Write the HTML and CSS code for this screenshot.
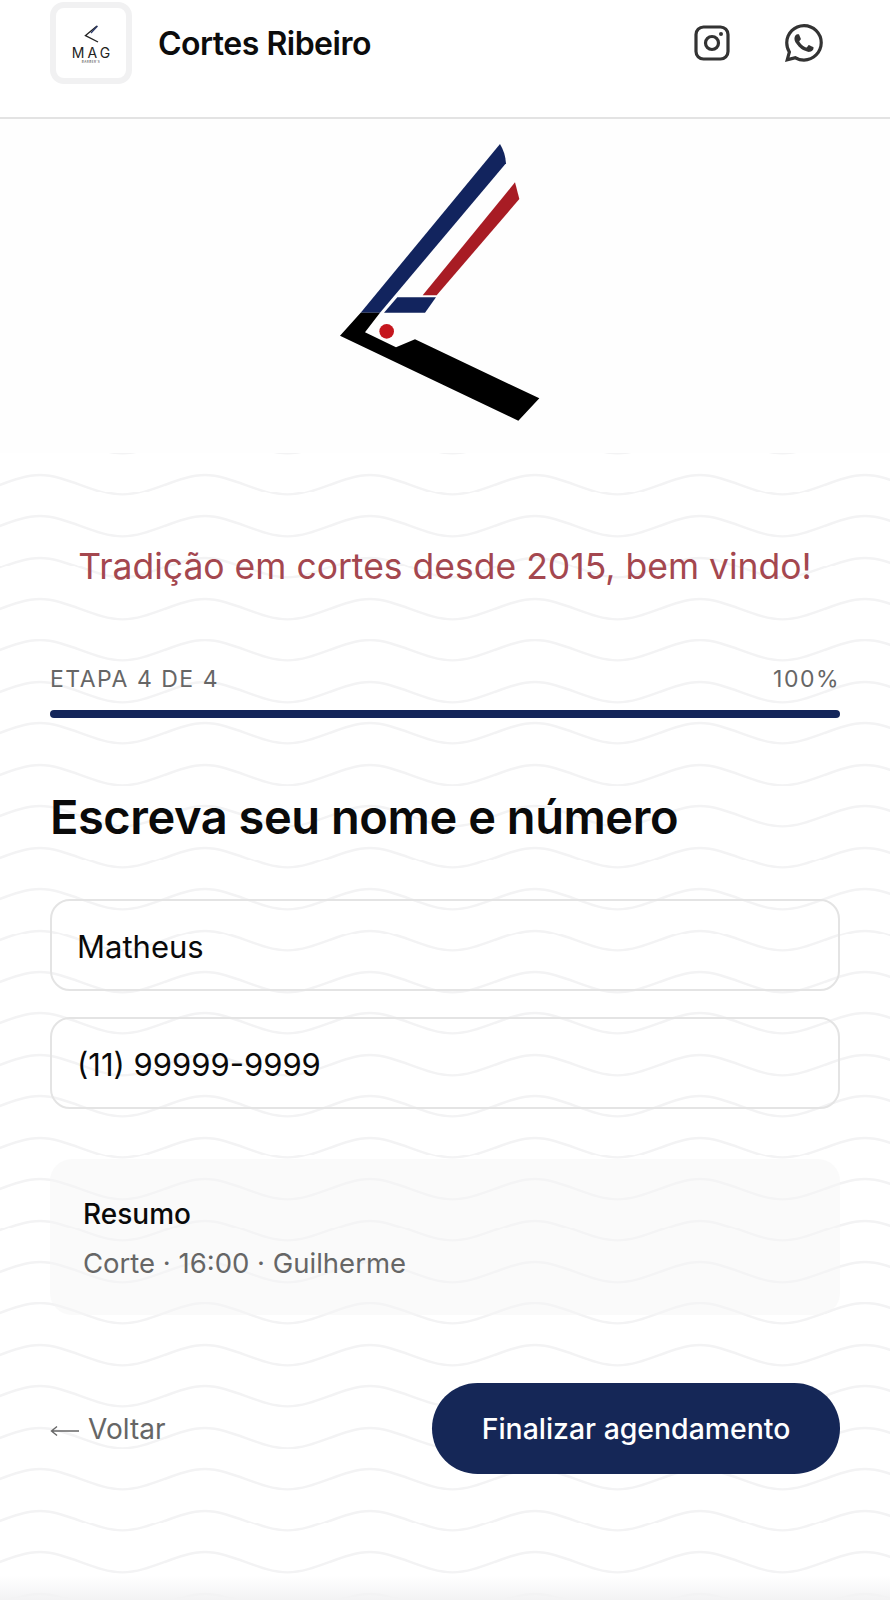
FILE: index.html
```html
<!DOCTYPE html>
<html lang="pt-BR">
<head>
  <meta charset="UTF-8">
  <meta name="viewport" content="width=device-width, initial-scale=1.0">
  <title>Cortes Ribeiro</title>
  <link rel="stylesheet" href="styles.css">
</head>
<body>
  <header class="top-bar">
    <div class="brand">
      <div class="brand-logo">
        <svg class="brand-razor" viewBox="0 0 16 18" aria-hidden="true">
          <path d="M14 1 L2.5 10.5 L15 17" fill="none" stroke="#222" stroke-width="1.4"/>
          <path d="M14.5 1 L8 8" fill="none" stroke="#2b3a6b" stroke-width="1.2"/>
        </svg>
        <span class="brand-mag">MAG</span>
        <span class="brand-sub">BARBER'S</span>
      </div>
      <span class="brand-name">Cortes Ribeiro</span>
    </div>
    <div class="socials">
      <svg class="icon-insta" viewBox="0 0 36 36" aria-hidden="true">
        <rect x="2" y="2" width="32" height="32" rx="7.5" fill="none" stroke="#333" stroke-width="3.2"/>
        <circle cx="18" cy="18" r="6.5" fill="none" stroke="#333" stroke-width="3.2"/>
        <circle cx="27" cy="9" r="2" fill="#333"/>
      </svg>
      <svg class="icon-whats" viewBox="0 0 16 16" aria-hidden="true">
        <path fill="#333" d="M13.601 2.326A7.854 7.854 0 0 0 7.994 0C3.627 0 .068 3.558.064 7.926c0 1.399.366 2.76 1.057 3.965L0 16l4.204-1.102a7.933 7.933 0 0 0 3.79.965h.004c4.368 0 7.926-3.558 7.93-7.93A7.898 7.898 0 0 0 13.6 2.326zM7.994 14.521a6.573 6.573 0 0 1-3.356-.92l-.24-.144-2.494.654.666-2.433-.156-.251a6.56 6.56 0 0 1-1.007-3.505c0-3.626 2.957-6.584 6.591-6.584a6.56 6.56 0 0 1 4.66 1.931 6.557 6.557 0 0 1 1.928 4.66c-.004 3.639-2.961 6.592-6.592 6.592zm3.615-4.934c-.197-.099-1.17-.578-1.353-.646-.182-.065-.315-.099-.445.099-.133.197-.513.646-.627.775-.114.133-.232.148-.43.05-.197-.1-.836-.308-1.592-.985-.59-.525-.985-1.175-1.103-1.372-.114-.198-.011-.304.088-.403.087-.088.197-.232.296-.346.1-.114.133-.198.198-.33.065-.134.034-.248-.015-.347-.05-.099-.445-1.076-.612-1.47-.16-.389-.323-.335-.445-.34-.114-.007-.247-.007-.38-.007a.729.729 0 0 0-.529.247c-.182.198-.691.677-.691 1.654 0 .977.71 1.916.81 2.049.098.133 1.394 2.132 3.383 2.992.47.205.84.326 1.129.418.475.152.904.129 1.246.08.38-.058 1.171-.48 1.338-.943.164-.464.164-.86.114-.943-.049-.084-.182-.133-.38-.232z"/>
      </svg>
    </div>
  </header>

  <div class="hero">
    <svg class="hero-logo" viewBox="0 -33 750 1002" aria-hidden="true">
      <path fill="#12245e" d="M122 548 L540 42 Q556 68 558 100 L180 548 Z"/>
      <path fill="#a81c24" d="M308 496 L585 157 L598 207 L350 496 Z"/>
      <path fill="#12245e" d="M232 502 L348 502 L315 548 L192 548 Z"/>
      <path fill="#000" d="M60 617 L122 548 L180 548 L135 607 L228 652 L285 628 L658 805 L595 872 Z"/>
      <circle cx="200" cy="604" r="22" fill="#c5161d"/>
    </svg>
  </div>

  <main class="content">
    <p class="tagline">Tradição em cortes desde 2015, bem vindo!</p>

    <div class="progress-labels">
      <span>ETAPA 4 DE 4</span>
      <span>100%</span>
    </div>
    <div class="progress-bar"></div>

    <h1 class="step-title">Escreva seu nome e número</h1>

    <div class="fields">
      <input class="field" type="text" value="Matheus">
      <input class="field" type="text" value="(11) 99999-9999">
    </div>

    <section class="summary">
      <div class="summary-title">Resumo</div>
      <div class="summary-text">Corte · 16:00 · Guilherme</div>
    </section>

    <div class="actions">
      <a class="back-link" href="#">
        <svg class="back-arrow" viewBox="0 0 29 12" aria-hidden="true">
          <path d="M29 6 H1.5 M7 1.5 L1.5 6 L7 10.5" fill="none" stroke="#666" stroke-width="1.4"/>
        </svg>
        Voltar
      </a>
      <button class="finish-btn">Finalizar agendamento</button>
    </div>
  </main>

  <div class="page-fade"></div>
</body>
</html>
```

FILE: styles.css
```css
* { box-sizing: border-box; margin: 0; padding: 0; }
html, body { height: 100%; }
body {
  font-family: Inter, 'Liberation Sans', sans-serif;
  color: #0a0a0a;
  min-height: 1600px;
  position: relative;
  overflow: hidden;
  background-color: #fff;
  background-image: url("data:image/svg+xml,%3Csvg xmlns='http://www.w3.org/2000/svg' width='165' height='41.45' viewBox='0 0 165 41.45'%3E%3Cpath d='M-42.5 26 C-15 26 13 6 40 6 C67 6 95 26 122.5 26 C150 26 178 6 205 6' fill='none' stroke='%23f3f3f4' stroke-width='2.4'/%3E%3C/svg%3E");
  background-size: 165px 41.45px;
  background-position: 0 13px;
}

/* Header */
.top-bar {
  display: flex;
  justify-content: space-between;
  align-items: center;
  height: 119px;
  padding: 2px 67px 34px 50px;
  background: #fff;
  border-bottom: 2px solid #e3e3e3;
}
.brand { display: flex; align-items: center; gap: 26px; }
.brand-logo {
  width: 82px;
  height: 82px;
  border: 6px solid #f1f1f2;
  border-radius: 14px;
  background: #fff;
  display: flex;
  flex-direction: column;
  align-items: center;
  padding-top: 17px;
}
.brand-razor { width: 16px; height: 18px; }
.brand-mag {
  font-size: 14px;
  line-height: 14px;
  letter-spacing: 3px;
  margin: 3px 0 0 3px;
  color: #222;
}
.brand-sub {
  font-size: 3px;
  line-height: 5px;
  letter-spacing: 0.5px;
  color: #333;
  white-space: nowrap;
}
.brand-name {
  padding-top: 2px;
  font-size: 32px;
  font-weight: 600;
  letter-spacing: -0.5px;
  color: #0c0c0c;
}
.socials { display: flex; align-items: center; gap: 55px; }
.icon-insta { width: 36px; height: 36px; }
.icon-whats { width: 38px; height: 38px; }

/* Hero */
.hero {
  height: 334px;
  background: #fefefe;
  display: flex;
  justify-content: center;
}
.hero-logo { width: 250px; height: 334px; }

/* Content */
.content { padding: 0 50px; }
.tagline {
  margin-top: 89px;
  font-size: 35.5px;
  line-height: 50px;
  text-align: center;
  color: #a4474f;
  white-space: nowrap;
}
.progress-labels {
  display: flex;
  justify-content: space-between;
  margin-top: 72px;
  font-size: 23px;
  line-height: 30px;
  letter-spacing: 1.5px;
  color: #666;
}
.progress-bar {
  height: 8px;
  margin-top: 16px;
  border-radius: 4px;
  background: #14265a;
}
.step-title {
  margin-top: 68.5px;
  font-size: 47px;
  line-height: 60px;
  font-weight: 600;
  letter-spacing: -0.45px;
  color: #0a0a0a;
}
.fields {
  display: flex;
  flex-direction: column;
  gap: 26px;
  margin-top: 52px;
}
.field {
  height: 92px;
  padding: 3px 25px 0;
  border: 2px solid #e4e4e4;
  border-radius: 20px;
  background: transparent;
  font-family: inherit;
  font-size: 31px;
  color: #0a0a0a;
  outline: none;
}
.summary {
  margin-top: 50px;
  height: 156px;
  padding: 37px 33px;
  border-radius: 22px;
  background: rgba(245, 245, 245, 0.5);
}
.summary-title {
  font-size: 28px;
  line-height: 36px;
  font-weight: 500;
  color: #0a0a0a;
}
.summary-text {
  margin-top: 13px;
  font-size: 27.5px;
  line-height: 36px;
  color: #666;
}
.actions {
  display: flex;
  justify-content: space-between;
  align-items: center;
  margin-top: 68px;
}
.back-link {
  display: flex;
  align-items: center;
  gap: 9px;
  padding-top: 2px;
  font-size: 28px;
  color: #666;
  text-decoration: none;
}
.back-arrow { width: 29px; height: 12px; margin-top: 3px; }
.finish-btn {
  width: 408px;
  height: 91px;
  border: none;
  border-radius: 46px;
  background: #152757;
  color: #fff;
  font-family: inherit;
  font-size: 28.4px;
  font-weight: 500;
}

/* Bottom fade */
.page-fade {
  position: absolute;
  left: 0;
  right: 0;
  bottom: 0;
  height: 24px;
  background: linear-gradient(rgba(245,245,246,0), #f3f3f4);
}
```
